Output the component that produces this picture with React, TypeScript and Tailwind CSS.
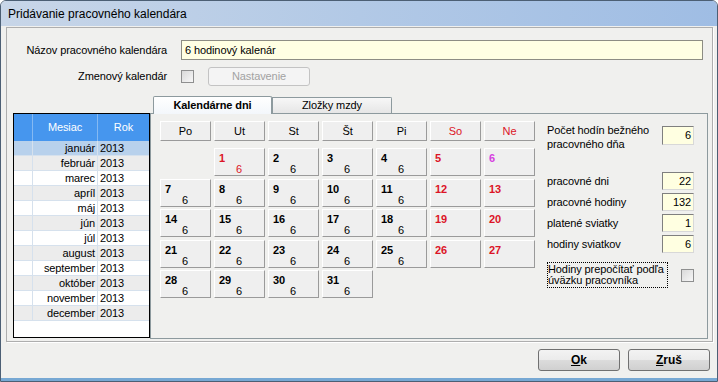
import React from 'react';

type Day = { n: number; num: string; hrs?: string } | null;

const RED = 'text-[#dc1426]';

const days: Day[] = [
    null,
    { n: 1, num: RED, hrs: RED },
    { n: 2, num: 'text-black', hrs: 'text-black' },
    { n: 3, num: 'text-black', hrs: 'text-black' },
    { n: 4, num: 'text-black', hrs: 'text-black' },
    { n: 5, num: RED },
    { n: 6, num: 'text-[#d63ee0]' },
];
for (let n = 7; n <= 31; n++) {
    const dow = n % 7; // 0 = Po
    if (dow === 5 || dow === 6) days.push({ n, num: RED });
    else days.push({ n, num: 'text-black', hrs: 'text-black' });
}
while (days.length < 35) days.push(null);

const months = [
    'január', 'február', 'marec', 'apríl', 'máj', 'jún',
    'júl', 'august', 'september', 'október', 'november', 'december',
];

const headers = [
    { t: 'Po', c: 'text-black' },
    { t: 'Ut', c: 'text-black' },
    { t: 'St', c: 'text-black' },
    { t: 'Št', c: 'text-black' },
    { t: 'Pi', c: 'text-black' },
    { t: 'So', c: RED },
    { t: 'Ne', c: RED },
];

const raised = 'bg-[#efefef] border border-t-white border-l-white border-b-[#9a9a9a] border-r-[#9a9a9a]';
const sunken = 'bg-[#ffffe1] border border-t-[#7f7f7f] border-l-[#7f7f7f] border-b-[#d8d8d8] border-r-[#d8d8d8]';

const Checkbox = () => (
    <div className="w-[13px] h-[13px] border border-[#8e8f8f] bg-[linear-gradient(135deg,#d9d9d9,#f7f7f7)]" />
);

const DayCell = ({ d }: { d: Day }) => {
    if (!d) return <div />;
    return (
        <div className={`h-[28px] flex pl-[4px] pt-[3px] ${raised}`}>
            <span className={`w-[17px] font-bold text-[11px] leading-[12px] ${d.num}`}>{d.n}</span>
            {d.hrs && <span className={`mt-[11px] text-[11px] leading-[12px] ${d.hrs}`}>6</span>}
        </div>
    );
};

const StatRow = ({ label, value }: { label: string; value: string }) => (
    <div className="flex items-center justify-between h-[18px]">
        <span>{label}</span>
        <div className={`w-[32px] h-[18px] text-right pr-[2px] leading-[16px] ${sunken}`}>{value}</div>
    </div>
);

export default function App() {
    return (
        <div className="w-[718px] h-[382px] flex flex-col border border-[#4c5f74] rounded-t-[6px] overflow-hidden bg-[#f0f0ee] text-[11px] tracking-[-0.1px] text-black font-['Liberation_Sans',Arial,sans-serif]">
            {/* title bar */}
            <div className="h-[25px] shrink-0 flex items-center pl-[7px] text-[12px] tracking-normal bg-[linear-gradient(90deg,#c8d6e8,#b2c9e6_50%,#9fbde4)]">
                Pridávanie pracovného kalendára
            </div>

            <div className="flex-1 flex flex-col px-[5px] pr-[4px] border-b-[3px] border-[#77a8d3]">
                {/* main group */}
                <div className="mt-px h-[315px] border border-[#aeaeae] shadow-[1px_1px_0_#fff]">
                    <div className="flex items-center mt-[12px] h-[20px]">
                        <span className="w-[160px] text-right">Názov pracovného kalendára</span>
                        <div className="ml-[14px] w-[522px] h-[20px] border border-[#8d8d84] bg-[#ffffe3] pl-[3px] leading-[18px]">
                            6 hodinový kalenár
                        </div>
                    </div>
                    <div className="flex items-center mt-[7px] h-[19px]">
                        <span className="w-[160px] text-right">Zmenový kalendár</span>
                        <div className="ml-[14px]"><Checkbox /></div>
                        <div className="ml-[14px] w-[102px] h-[19px] border border-[#c3c3c3] rounded-[3px] bg-[#f4f4f4] text-[#a2a2a2] flex items-center justify-center">
                            Nastavenie
                        </div>
                    </div>

                    <div className="flex mt-[10px]">
                        {/* month list */}
                        <div className="ml-[6px] mt-[17px] w-[137px] h-[225px] border border-black bg-white flex flex-col">
                            <div className="h-[27px] flex bg-[#4696ee] text-white">
                                <div className="w-[19px] border-r border-[#85b9f2]" />
                                <div className="w-[65px] border-r border-[#85b9f2] flex items-center justify-center">Mesiac</div>
                                <div className="flex-1 flex items-center justify-center">Rok</div>
                            </div>
                            {months.map((m, i) => (
                                <div
                                    key={m}
                                    className={`h-[15px] flex border-b border-[#d6e1ed] leading-[14px] ${i === 0 ? 'bg-[#b8d1ec]' : i % 2 === 1 ? 'bg-[#ececec]' : 'bg-white'}`}
                                >
                                    <div className="w-[19px] border-r border-[#d6e1ed]" />
                                    <div className="w-[65px] border-r border-[#d6e1ed] text-right pr-[2px]">{m}</div>
                                    <div className="flex-1 pl-[2px]">2013</div>
                                </div>
                            ))}
                        </div>

                        {/* tabs */}
                        <div className="w-[558px] flex flex-col">
                            <div className="h-[17px] flex items-end pl-[3px]">
                                <div className="relative z-10 -mb-px w-[119px] h-[18px] border border-b-0 border-[#8d9a9e] rounded-t-[2px] bg-[linear-gradient(#ffffff,#f3f7fb)] font-bold flex items-center justify-center">
                                    Kalendárne dni
                                </div>
                                <div className="w-[120px] h-[16px] border border-b-0 border-[#8d9a9e] rounded-tr-[2px] bg-[linear-gradient(#f7f7f7,#e6e6e6)] flex items-center justify-center">
                                    Zložky mzdy
                                </div>
                            </div>
                            <div className="h-[226px] border border-[#8d9a9e] flex pl-[9px] pt-[7px]">
                                <div className="w-[375px]">
                                    <div className="grid grid-cols-[repeat(7,51px)] gap-x-[3px]">
                                        {headers.map(h => (
                                            <div key={h.t} className={`h-[20px] flex items-center justify-center ${raised} ${h.c}`}>
                                                {h.t}
                                            </div>
                                        ))}
                                    </div>
                                    <div className="grid grid-cols-[repeat(7,51px)] gap-x-[3px] gap-y-[2.5px] mt-[7px]">
                                        {days.map((d, i) => (
                                            <DayCell key={i} d={d} />
                                        ))}
                                    </div>
                                </div>

                                <div className="ml-[12px] w-[147px] pt-[2px] leading-[14px]">
                                    <div className="flex justify-between">
                                        <span>Počet hodín bežného<br />pracovného dňa</span>
                                        <div className={`mt-[3px] w-[32px] h-[19px] text-right pr-[2px] leading-[17px] ${sunken}`}>6</div>
                                    </div>
                                    <div className="mt-[21px] flex flex-col gap-[3px]">
                                        <StatRow label="pracovné dni" value="22" />
                                        <StatRow label="pracovné hodiny" value="132" />
                                        <StatRow label="platené sviatky" value="1" />
                                        <StatRow label="hodiny sviatkov" value="6" />
                                    </div>
                                    <div className="mt-[9px] flex items-center justify-between">
                                        <div className="w-[121px] border border-dotted border-black leading-[11px] py-[1px]">
                                            Hodiny prepočítať podľa<br />úväzku pracovníka
                                        </div>
                                        <Checkbox />
                                    </div>
                                </div>
                            </div>
                        </div>
                    </div>
                </div>

                {/* buttons */}
                <div className="flex justify-end gap-[8px] mt-[7px] pr-[3px]">
                    {['Ok', 'Zruš'].map(t => (
                        <div
                            key={t}
                            className="w-[82px] h-[22px] border border-[#707070] rounded-[3px] bg-[linear-gradient(#f3f3f3_0%,#ebebeb_50%,#dcdcdc_50%,#d0d0d0_100%)] flex items-center justify-center font-bold text-[12px] tracking-normal"
                        >
                            <span className="underline">{t[0]}</span>{t.slice(1)}
                        </div>
                    ))}
                </div>
            </div>
        </div>
    );
}
